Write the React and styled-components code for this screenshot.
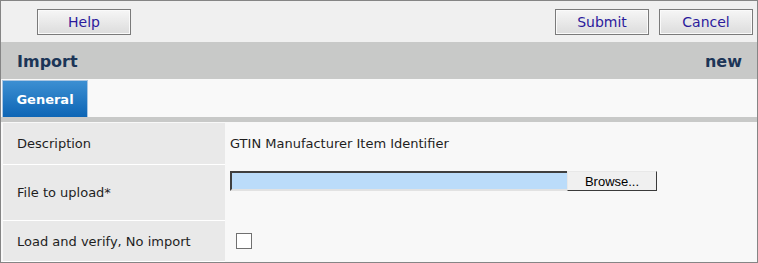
import React from "react";
import styled, { createGlobalStyle } from "styled-components";

const Global = createGlobalStyle`
  html, body { margin: 0; padding: 0; background: #ffffff; }
  body { font-family: "DejaVu Sans", Verdana, sans-serif; }
`;

const Frame = styled.div`
  width: 758px;
  height: 263px;
  box-sizing: border-box;
  border: 1px solid #858585;
  background: #c8c9c8;
  display: flex;
  flex-direction: column;
  overflow: hidden;
`;

const Toolbar = styled.div`
  height: 41px;
  background: #f0f0f0;
  display: flex;
  align-items: flex-start;
  padding: 8px 4px 0 36px;
  box-sizing: border-box;
  gap: 10px;
`;

const Spacer = styled.div`
  flex: 1;
`;

const Button = styled.button`
  width: 94px;
  height: 26px;
  box-sizing: border-box;
  border: 1px solid #7a7a7a;
  background: linear-gradient(#f6f6f6, #dcdcdc);
  box-shadow: inset 0 0 0 1px #fafafa;
  color: #2b1a9c;
  font-family: "DejaVu Sans", Verdana, sans-serif;
  font-size: 14px;
  padding: 0;
  line-height: 22px;
`;

const Header = styled.div`
  height: 37px;
  background: #c8c9c8;
  display: flex;
  align-items: center;
  justify-content: space-between;
  padding: 1px 15px 0 16px;
  box-sizing: border-box;
  color: #1c3557;
  font-family: "DejaVu Sans", Verdana, sans-serif;
  font-weight: bold;
  font-size: 16px;
`;

const TabBar = styled.div`
  height: 38px;
  background: #f9f9f9;
  display: flex;
  align-items: flex-end;
  padding-left: 1px;
`;

const Tab = styled.div`
  width: 86px;
  height: 37px;
  box-sizing: border-box;
  border: 1px solid #a9c6e2;
  border-bottom: none;
  background: linear-gradient(#3c8fd2, #0d65b5);
  color: #ffffff;
  font-family: "DejaVu Sans", Verdana, sans-serif;
  font-weight: bold;
  font-size: 13px;
  display: flex;
  align-items: center;
  justify-content: center;
`;

const Divider = styled.div`
  height: 5px;
  background: #c8c9c8;
`;

const Form = styled.div`
  flex: 1;
  background: #f8f8f8;
  display: grid;
  grid-template-columns: 222px 1fr;
  grid-template-rows: 41px 55px 40px;
  row-gap: 1px;
  padding: 1px 0 0 2px;
  align-content: start;
`;

const Label = styled.div`
  background: #e9e9e9;
  display: flex;
  align-items: center;
  padding-left: 14px;
  font-size: 13px;
  color: #1e1e1e;
  box-shadow: 0 1px 0 #ffffff;
`;

const Value = styled.div`
  display: flex;
  align-items: ${(p) => p.$align || "center"};
  padding: ${(p) => p.$pad || "0"} 0 0 5px;
  font-size: 13px;
  color: #1e1e1e;
`;

const FileRow = styled.div`
  display: flex;
  align-items: flex-start;
`;

const FileField = styled.div`
  width: 337px;
  height: 20px;
  box-sizing: border-box;
  border-top: 2px solid #3f3f3f;
  border-left: 2px solid #3f3f3f;
  border-bottom: 2px solid #e2e2e2;
  background: #bbdcfa;
`;

const Browse = styled.button`
  width: 90px;
  height: 20px;
  box-sizing: border-box;
  background: #f0f0f0;
  border: none;
  border-right: 1px solid #3a3a3a;
  border-bottom: 1px solid #3a3a3a;
  border-top: 1px solid #e8e8e8;
  border-left: 1px solid #e8e8e8;
  font-family: "Liberation Sans", Arial, sans-serif;
  font-size: 13px;
  color: #000;
  padding: 0;
`;

const Check = styled.div`
  width: 16px;
  height: 16px;
  box-sizing: border-box;
  border: 1px solid #707070;
  background: #ffffff;
  margin-left: 6px;
`;

export default function App() {
  return (
    <>
      <Global />
      <Frame>
        <Toolbar>
          <Button>Help</Button>
          <Spacer />
          <Button>Submit</Button>
          <Button>Cancel</Button>
        </Toolbar>
        <Header>
          <span>Import</span>
          <span>new</span>
        </Header>
        <TabBar>
          <Tab>General</Tab>
        </TabBar>
        <Divider />
        <Form>
          <Label>Description</Label>
          <Value>GTIN Manufacturer Item Identifier</Value>
          <Label>File to upload*</Label>
          <Value $align="flex-start" $pad="6px">
            <FileRow>
              <FileField />
              <Browse>Browse...</Browse>
            </FileRow>
          </Value>
          <Label>Load and verify, No import</Label>
          <Value $align="flex-start" $pad="12px">
            <Check />
          </Value>
        </Form>
      </Frame>
    </>
  );
}
